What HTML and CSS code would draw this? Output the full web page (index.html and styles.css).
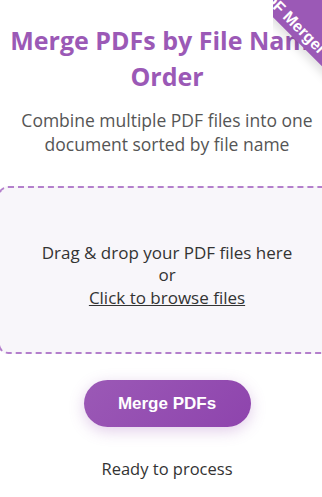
FILE: index.html
```html
<!DOCTYPE html>
<html lang="en">
<head>
<meta charset="utf-8">
<title>Merge PDFs by File Name Order</title>
<link rel="stylesheet" href="styles.css">
</head>
<body>
<div class="ribbon"><span>PDF Merger</span></div>
<main class="container">
  <h1 class="title">Merge PDFs by File Name Order</h1>
  <p class="subtitle">Combine multiple PDF files into one document sorted by file name</p>
  <div class="dropzone">
    <p class="drop-text">Drag &amp; drop your PDF files here<br>or<br><span class="browse">Click to browse files</span></p>
  </div>
  <button class="merge-btn" type="button">Merge PDFs</button>
  <p class="status">Ready to process</p>
</main>
</body>
</html>
```
FILE: styles.css
```css
html, body {
  margin: 0;
  padding: 0;
  background: #ffffff;
  overflow: hidden;
}
body {
  font-family: "Open Sans", "Noto Sans", sans-serif;
  color: #333333;
}
.container {
  width: 338px;
  margin-left: -2px;
  padding-top: 22px;
  display: flex;
  flex-direction: column;
  align-items: center;
  text-align: center;
}
.title {
  margin: 0;
  font-size: 25px;
  line-height: 36px;
  font-weight: 700;
  color: #9b59b6;
}
.subtitle {
  margin: 14px 0 0;
  font-size: 17.5px;
  line-height: 24px;
  color: #555555;
}
.dropzone {
  box-sizing: border-box;
  width: 100%;
  height: 168px;
  margin-top: 30px;
  padding-top: 11px;
  border: 2px dashed #b47fcc;
  border-radius: 10px;
  background: #f8f6fa;
  display: flex;
  align-items: center;
  justify-content: center;
}
.drop-text {
  margin: 0;
  font-size: 17px;
  line-height: 22.5px;
  color: #333333;
}
.browse {
  text-decoration: underline;
}
.merge-btn {
  margin-top: 26px;
  width: 167px;
  height: 47px;
  border: none;
  border-radius: 24px;
  background: linear-gradient(135deg, #9b59b6, #8e44ad);
  color: #ffffff;
  font-family: "Liberation Sans", Arial, sans-serif;
  font-weight: 700;
  font-size: 17px;
  box-shadow: 0 4px 15px rgba(155, 89, 182, 0.3);
}
.status {
  margin: 31px 0 0;
  font-size: 16.5px;
  line-height: 22px;
  color: #333333;
}
.ribbon {
  position: absolute;
  top: 0;
  right: -31px;
  width: 80px;
  height: 90px;
  overflow: hidden;
  z-index: 2;
}
.ribbon span {
  position: absolute;
  display: block;
  width: 170px;
  height: 19px;
  padding: 30px 0 0;
  left: -57px;
  top: -14px;
  transform: rotate(45deg);
  background: #9b59b6;
  color: #ffffff;
  font-family: "Liberation Sans", Arial, sans-serif;
  font-weight: 700;
  font-size: 16px;
  line-height: 16px;
  text-align: center;
  box-shadow: 0 5px 10px rgba(0, 0, 0, 0.12);
}
```
